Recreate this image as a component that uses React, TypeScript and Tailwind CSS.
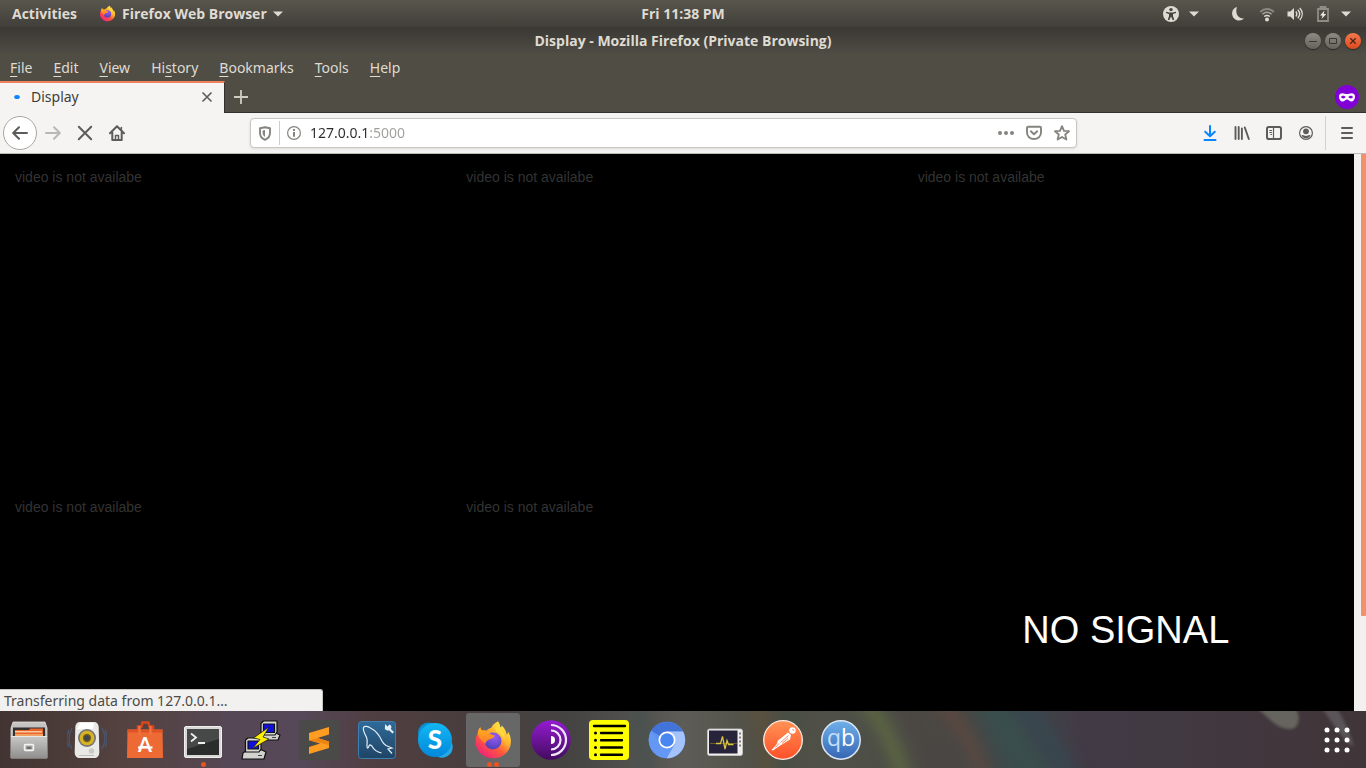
import type { ReactNode } from "react";

function Caret() {
  return (
    <svg width="10" height="6" viewBox="0 0 10 6" fill="currentColor" aria-hidden="true">
      <path d="M0 .5h10L5 5.5z" />
    </svg>
  );
}

function FirefoxLogo({ size, id }: { size: number; id: string }) {
  return (
    <svg width={size} height={size} viewBox="0 0 40 40" aria-hidden="true">
      <defs>
        <linearGradient id={id + "body"} x1="0.85" y1="0.1" x2="0.2" y2="0.95">
          <stop offset="0" stopColor="#ffe94a" />
          <stop offset="0.35" stopColor="#ffb02e" />
          <stop offset="0.6" stopColor="#ff5b3a" />
          <stop offset="1" stopColor="#f0227a" />
        </linearGradient>
        <radialGradient id={id + "globe"} cx="0.6" cy="0.25" r="0.8">
          <stop offset="0" stopColor="#9a5cf0" />
          <stop offset="1" stopColor="#4a3fb8" />
        </radialGradient>
        <linearGradient id={id + "fox"} x1="0" y1="0" x2="0" y2="1">
          <stop offset="0" stopColor="#ffb21e" />
          <stop offset="1" stopColor="#ff7a2b" />
        </linearGradient>
      </defs>
      <path
        fill={`url(#${id}body)`}
        d="M25 1.500c1.500 2 2 4 2.200 6 .8-.5 1.300-1 1.600-2 3 3 4.500 6 4.900 9 1.300-.3 1.200-2 1.200-3 2.500 3.500 3.100 7.500 3 10.500C37.400 31.500 29.800 38.200 20.200 38.200 10.500 38.200 3 31.200 2.500 22.200c-.2-4 .8-6.500 2.200-9 .1-2 1-4.600 2.600-6 .2 1.400.7 2.500 1.500 3.300 1.400-.3 3-.1 4.500.3 2-2 3.200-2.300 5-3 1-3 4-5.100 6.700-6.300z"
      />
      <circle cx="20" cy="21" r="8.500" fill={`url(#${id}globe)`} />
      <path
        fill={`url(#${id}fox)`}
        d="M4.700 13.500c.4-2.300 1.200-4.800 2.600-6.200.2 1.500.8 2.700 1.800 3.400 2.600-.6 5.200.1 7.200 1.900 1 1.700 2.500 2.600 5.300 2.800-.2 2.500-3.600 3.300-5.400 4-2 1-3.200 1.800-3.700 4.300C7.500 20.500 5.500 17 4.700 13.500z"
      />
      <path fill="#ffd93b" d="M25 1.500c1.500 2 2 4 2.200 6 3.500 4 5 8 4.200 13-1.500-5-4.500-8-8-9-1.800-3.500-.8-7.500 1.600-10z" />
    </svg>
  );
}

function MenuItem({ before = "", letter, after }: { before?: string; letter: string; after: string }) {
  return (
    <button type="button" className="text-[14px] leading-5 text-[#dfdbd2]">
      {before}
      <u className="decoration-1 underline-offset-[3px]">{letter}</u>
      {after}
    </button>
  );
}

function ToolButton({ label, children }: { label: string; children: ReactNode }) {
  return (
    <button
      type="button"
      aria-label={label}
      className="flex h-8 w-8 shrink-0 items-center justify-center text-[#5d5c5a]"
    >
      {children}
    </button>
  );
}

function TopPanel() {
  return (
    <header className="grid h-[27px] shrink-0 grid-cols-[1fr_auto_1fr] items-center bg-linear-to-b from-[#59564d] to-[#413f3a] px-3 font-['Open_Sans',sans-serif] text-[14px] leading-5 font-bold text-[#dfdbd2]">
      <div className="flex items-center gap-[22px]">
        <button type="button">Activities</button>
        <button type="button" className="flex items-center gap-[6px]">
          <FirefoxLogo size={17} id="panel" />
          <span>Firefox Web Browser</span>
          <Caret />
        </button>
      </div>
      <button type="button">Fri 11:38 PM</button>
      <div className="flex items-center justify-end gap-3 pr-[3px]">
        <button type="button" aria-label="Accessibility" className="mr-5 flex items-center gap-[10px]">
          <svg width="16" height="16" viewBox="0 0 16 16" aria-hidden="true">
            <circle cx="8" cy="8" r="8" fill="#dfdbd2" />
            <circle cx="8" cy="3.600" r="1.700" fill="#45433e" />
            <path d="M3 5.700l3.300.7h3.400l3.300-.7v1.300l-3 .9v2l1.200 3.900-1.400.4L8 10.500l-1.800 3.700-1.400-.4L6 9.900v-2l-3-.9z" fill="#45433e" />
          </svg>
          <Caret />
        </button>
        <button type="button" aria-label="System menu" className="flex items-center">
          <svg className="mr-[14px]" width="14" height="16" viewBox="0 0 14 16" aria-hidden="true">
            <path d="M6 1C2.500 2 .8 5 1.200 8.500 1.700 12 4.500 14.500 8 14.500c2.200 0 3.800-.8 5-2.200-5 .8-9.500-4.300-7-11.300z" fill="#dfdbd2" />
          </svg>
          <svg className="mr-3" width="16" height="16" viewBox="0 0 16 16" fill="none" aria-hidden="true">
            <path d="M1.200 6c4-4 9.600-4 13.600 0" stroke="#8a8780" strokeWidth="1.800" />
            <path d="M3.300 8.300c3-2.600 6.400-2.600 9.400 0" stroke="#a5a29a" strokeWidth="1.500" />
            <path d="M5.200 10.500c2-1.500 3.600-1.500 5.600 0" stroke="#dfdbd2" strokeWidth="1.500" />
            <circle cx="8" cy="13.500" r="2" fill="#dfdbd2" />
          </svg>
          <svg className="mr-3" width="16" height="16" viewBox="0 0 16 16" fill="none" aria-hidden="true">
            <path d="M.5 5.500h2.800L7 2v12L3.300 10.500H.5z" fill="#dfdbd2" />
            <path d="M8.800 5.500c1.200 1.500 1.200 3.500 0 5M10.800 3.800c2.300 2.600 2.300 5.800 0 8.400M12.800 2c3.200 3.600 3.200 8.400 0 12" stroke="#dfdbd2" strokeWidth="1.400" />
          </svg>
          <svg className="mr-[10px]" width="16" height="16" viewBox="0 0 16 16" fill="none" aria-hidden="true">
            <path d="M5.500 2.500V1h5v1.500M3 3h10v12H3z" stroke="#8f8c85" strokeWidth="1.800" />
            <path d="M9.500 4.500L5 9.500h2.500L6.500 13l4.700-5H8.700z" fill="#f0ece4" />
          </svg>
          <Caret />
        </button>
      </div>
    </header>
  );
}

function TitleBar() {
  const round = "flex h-4 w-4 items-center justify-center rounded-full shadow-[0_1px_1px_#2a2926] ";
  return (
    <div className="grid h-7 shrink-0 grid-cols-[1fr_auto_1fr] items-center bg-linear-to-b from-[#3a3834] to-[#504d45] px-[5px]">
      <span />
      <h1 className="font-['Open_Sans',sans-serif] text-[14px] leading-5 font-bold text-[#dfdbd2]">
        Display - Mozilla Firefox (Private Browsing)
      </h1>
      <div className="flex justify-end gap-1">
        <button type="button" aria-label="Minimize" className={round + "bg-linear-to-b from-[#8d8b83] to-[#65635c]"}>
          <svg width="16" height="16" viewBox="0 0 16 16" stroke="#3a3834" aria-hidden="true">
            <path d="M4 8.500h8" />
          </svg>
        </button>
        <button type="button" aria-label="Maximize" className={round + "bg-linear-to-b from-[#8d8b83] to-[#65635c]"}>
          <svg width="16" height="16" viewBox="0 0 16 16" stroke="#3a3834" fill="none" aria-hidden="true">
            <path d="M4.500 5.500h7v5h-7z" />
          </svg>
        </button>
        <button type="button" aria-label="Close window" className={round + "bg-linear-to-b from-[#f4784e] to-[#dc4a1a]"}>
          <svg width="16" height="16" viewBox="0 0 16 16" stroke="#4b2415" strokeWidth="1.300" aria-hidden="true">
            <path d="M5.300 5.300l5.400 5.400M10.700 5.300l-5.400 5.400" />
          </svg>
        </button>
      </div>
    </div>
  );
}

function MenuBar() {
  return (
    <nav aria-label="Menu" className="flex h-[26px] shrink-0 items-center gap-[21px] bg-[#504d45] px-[10px]">
      <MenuItem letter="F" after="ile" />
      <MenuItem letter="E" after="dit" />
      <MenuItem letter="V" after="iew" />
      <MenuItem before="Hi" letter="s" after="tory" />
      <MenuItem letter="B" after="ookmarks" />
      <MenuItem letter="T" after="ools" />
      <MenuItem letter="H" after="elp" />
    </nav>
  );
}

function TabStrip() {
  return (
    <div className="flex h-8 shrink-0 items-stretch bg-[#504d45]">
      <div className="flex w-[225px] items-center border-t-2 border-r border-t-[#f0805a] border-r-[#33312e] bg-[#f5f4f2] pr-[7px] pb-0.5 pl-[14px]">
        <svg width="6" height="6" viewBox="0 0 6 6" aria-hidden="true">
          <ellipse cx="3" cy="3" rx="2.800" ry="2" fill="#0a84ff" />
        </svg>
        <span className="ml-[11px] flex-1 text-[14px] leading-5 text-[#3e3d3a]">Display</span>
        <button type="button" aria-label="Close tab" className="flex h-5 w-5 items-center justify-center text-[#5d5c5a]">
          <svg width="12" height="12" viewBox="0 0 12 12" stroke="currentColor" strokeWidth="1.600" aria-hidden="true">
            <path d="M1.500 1.500l9 9M10.500 1.500l-9 9" />
          </svg>
        </button>
      </div>
      <div className="flex flex-1 items-center justify-between border-b border-[#33312e] pr-[7px] pl-[2px]">
        <button type="button" aria-label="New tab" className="flex h-7 w-7 items-center justify-center text-[#cfccc4]">
          <svg width="14" height="14" viewBox="0 0 14 14" stroke="currentColor" strokeWidth="1.800" aria-hidden="true">
            <path d="M7 0v14M0 7h14" />
          </svg>
        </button>
        <svg width="24" height="24" viewBox="0 0 24 24" role="img" aria-label="Private browsing">
          <circle cx="12" cy="12" r="12" fill="#8000d7" />
          <path
            fill="#fff"
            fillRule="evenodd"
            d="M7.500 8.300c1.800 0 3 .8 4.500.8s2.700-.8 4.500-.8c2.500 0 3.500 1.300 3.500 3.400 0 2.500-1.500 4.800-3.600 4.800-1.900 0-2.900-2-4.400-2s-2.500 2-4.400 2C5.500 16.500 4 14.200 4 11.700c0-2.100 1-3.400 3.500-3.400zM8.300 10.800c-1.200 0-2 .7-2.300 1.300.4.700 1.200 1.300 2.300 1.300 1.100 0 1.900-.6 2.300-1.300-.4-.6-1.200-1.300-2.300-1.300zM15.700 10.800c-1.100 0-1.900.7-2.300 1.300.4.700 1.200 1.300 2.300 1.300 1.100 0 1.900-.6 2.300-1.300-.3-.6-1.200-1.300-2.300-1.300z"
          />
        </svg>
      </div>
    </div>
  );
}

function NavBar() {
  return (
    <div className="flex h-[41px] shrink-0 items-center border-b border-[#bcbab7] bg-[#f5f4f2]">
      <div className="flex w-[250px] shrink-0 items-center pl-[3px]">
        <button
          type="button"
          aria-label="Back"
          className="flex h-[34px] w-[34px] items-center justify-center rounded-full border border-[#a9a7a4] bg-white text-[#5d5c5a]"
        >
          <svg width="16" height="16" viewBox="0 0 16 16" fill="none" stroke="currentColor" strokeWidth="2" strokeLinecap="round" strokeLinejoin="round" aria-hidden="true">
            <path d="M15 8H1.500M7 2.200L1.200 8 7 13.800" />
          </svg>
        </button>
        <ToolButton label="Forward">
          <svg width="16" height="16" viewBox="0 0 16 16" fill="none" stroke="#b9b8b6" strokeWidth="2" strokeLinecap="round" strokeLinejoin="round" aria-hidden="true">
            <path d="M1 8h13.500M9 2.200L14.800 8 9 13.800" />
          </svg>
        </ToolButton>
        <ToolButton label="Stop">
          <svg width="16" height="16" viewBox="0 0 16 16" stroke="currentColor" strokeWidth="2" strokeLinecap="round" aria-hidden="true">
            <path d="M1.800 1.800l12.400 12.400M14.200 1.800L1.800 14.200" />
          </svg>
        </ToolButton>
        <ToolButton label="Home">
          <svg width="16" height="16" viewBox="0 0 16 16" fill="none" stroke="currentColor" strokeWidth="2" strokeLinecap="round" strokeLinejoin="round" aria-hidden="true">
            <path d="M1 8.200L8 1.300l7 6.900M3.300 7v8h9.400V7" />
            <path d="M6.500 15v-4.500h3V15" strokeWidth="1.500" />
            <path d="M12.300 2.500v2.300" strokeWidth="1.500" />
          </svg>
        </ToolButton>
      </div>

      <div className="flex h-[30px] min-w-0 flex-1 items-center rounded-[4px] border border-[#c9c5bf] bg-white shadow-[0_1px_3px_#0000001a]">
        <button type="button" aria-label="Tracking protection" className="flex h-6 w-[29px] shrink-0 items-center justify-center border-r border-[#cfcdca]">
          <svg width="14" height="15" viewBox="0 0 14 15" aria-hidden="true">
            <path d="M7 1.200l5 1V7c0 3.200-2 5.500-5 6.800C4 12.500 2 10.200 2 7V2.200z" fill="none" stroke="#85847f" strokeWidth="1.900" strokeLinejoin="round" />
            <path d="M7 4v7C5.200 9.800 4.600 8.500 4.600 7V4.400z" fill="#85847f" />
          </svg>
        </button>
        <button type="button" aria-label="Site information" className="flex h-6 w-[30px] shrink-0 items-center justify-center pr-0.5">
          <svg width="14" height="14" viewBox="0 0 14 14" fill="none" stroke="#85847f" aria-hidden="true">
            <circle cx="7" cy="7" r="6.400" strokeWidth="1.200" />
            <path d="M7 6v4.700" strokeWidth="2" />
            <path d="M7 3v2" strokeWidth="2" />
          </svg>
        </button>
        <input
          type="text"
          aria-label="Address"
          defaultValue="127.0.0.1:5000"
          className="min-w-0 flex-1 bg-linear-to-r from-[#2e2d2b] from-[60px] to-[#a09f9d] to-[60px] bg-clip-text text-[14px] leading-5 text-transparent outline-none"
        />
        <div className="flex shrink-0 items-center gap-3 pr-[6px]">
          <button type="button" aria-label="Page actions">
            <svg width="16" height="16" viewBox="0 0 16 16" fill="#85847f" aria-hidden="true">
              <circle cx="2" cy="8" r="2" />
              <circle cx="8" cy="8" r="2" />
              <circle cx="14" cy="8" r="2" />
            </svg>
          </button>
          <button type="button" aria-label="Save to Pocket">
            <svg width="16" height="16" viewBox="0 0 16 16" fill="none" stroke="#85847f" strokeWidth="1.900" strokeLinecap="round" strokeLinejoin="round" aria-hidden="true">
              <path d="M2 1.800h12c.6 0 1 .4 1 1V7.500c0 3.800-3.100 6.500-7 6.500S1 11.300 1 7.500V2.800c0-.6.400-1 1-1z" />
              <path d="M4.800 6.300L8 9.300l3.200-3" />
            </svg>
          </button>
          <button type="button" aria-label="Bookmark this page">
            <svg width="16" height="16" viewBox="0 0 16 16" fill="none" stroke="#85847f" strokeWidth="1.800" strokeLinejoin="round" aria-hidden="true">
              <path d="M8 1.200l2 4.600 5 .4-3.800 3.300 1.200 5L8 11.900l-4.400 2.600 1.200-5L1 6.200l5-.4z" />
            </svg>
          </button>
        </div>
      </div>

      <div className="flex w-[289px] shrink-0 items-center justify-end pr-[3px]">
        <ToolButton label="Downloads">
          <svg width="14" height="16" viewBox="0 0 14 16" fill="none" stroke="#0a84ff" strokeWidth="2" strokeLinecap="round" strokeLinejoin="round" aria-hidden="true">
            <path d="M7 1v10M2.200 6.700L7 11.300l4.800-4.600M1.500 15h11" />
          </svg>
        </ToolButton>
        <ToolButton label="Library">
          <svg width="16" height="16" viewBox="0 0 16 16" fill="none" stroke="currentColor" strokeWidth="1.900" strokeLinecap="round" aria-hidden="true">
            <path d="M1.500 2v12M4.700 2v12M7.900 3.500v10.500M10.800 2.500l4 11.500" />
          </svg>
        </ToolButton>
        <ToolButton label="Sidebar">
          <svg width="16" height="16" viewBox="0 0 16 16" fill="none" stroke="currentColor" aria-hidden="true">
            <rect x="1" y="2" width="14" height="12" rx="1.800" strokeWidth="2" />
            <path d="M7.500 2.500v11" strokeWidth="1.200" />
            <path d="M3.300 5.500h2.700M3.300 7.500h2.700M4.300 9.500H6" />
          </svg>
        </ToolButton>
        <ToolButton label="Account">
          <svg width="14" height="14" viewBox="0 0 14 14" aria-hidden="true">
            <circle cx="7" cy="7" r="6.400" fill="none" stroke="currentColor" strokeWidth="1.200" />
            <circle cx="7" cy="5.300" r="2.900" fill="currentColor" />
            <path d="M2.500 9.200c1.300-.4 2 .1 2.700.4 1.200.5 2.400.5 3.600 0 .7-.3 1.400-.8 2.700-.4C10.700 11 9 12.200 7 12.200S3.300 11 2.500 9.200z" fill="currentColor" />
          </svg>
        </ToolButton>
        <div className="mr-[5px] ml-[3px] h-[34px] w-px bg-[#d3d1cf]" />
        <ToolButton label="Open menu">
          <svg width="14" height="14" viewBox="0 0 14 14" stroke="currentColor" strokeWidth="2" strokeLinecap="round" aria-hidden="true">
            <path d="M2 2h10M2 7h10M2 12h10" />
          </svg>
        </ToolButton>
      </div>
    </div>
  );
}

function VideoWall() {
  const feeds = ["feed-1", "feed-2", "feed-3", "feed-4", "feed-5"];
  return (
    <main className="relative flex min-h-0 flex-1 overflow-hidden bg-black">
      <div className="grid flex-1 auto-rows-[330px] grid-cols-3 font-['Liberation_Sans',Arial,sans-serif]">
        {feeds.map((id) => (
          <p key={id} className="px-[15px] py-[13px] text-[14px] leading-5 text-[#333333]">
            video is not availabe
          </p>
        ))}
        <div className="pr-5 pl-[15px]">
          <div className="flex h-[292px] items-center justify-center text-[38px] leading-none text-white">NO SIGNAL</div>
        </div>
      </div>
      <div className="flex w-3 shrink-0 justify-end bg-[#f2f1f0]">
        <div className="h-[83%] w-[5px] rounded-b-[1px] bg-[#f19069]" />
      </div>
      <div
        role="status"
        className="absolute bottom-0 left-0 h-[22px] w-[323px] rounded-tr-[3px] border-t border-r border-[#c6c4c1] bg-[#f2f1f0] pl-1 text-[14px] leading-[22px] text-[#4c4b48]"
      >
        Transferring data from 127.0.0.1…
      </div>
    </main>
  );
}

function DockIcon({ children }: { children: ReactNode }) {
  return (
    <svg width="40" height="40" viewBox="0 0 40 40" aria-hidden="true">
      {children}
    </svg>
  );
}

function FilesIcon() {
  return (
    <DockIcon>
      <defs>
        <linearGradient id="cabinet" x1="0" y1="0" x2="0" y2="1">
          <stop offset="0" stopColor="#c9c9c7" />
          <stop offset="1" stopColor="#8f8f8d" />
        </linearGradient>
      </defs>
      <path d="M4 2h32l2 6v30H2V8z" fill="url(#cabinet)" stroke="#dededc" strokeWidth=".8" />
      <path d="M4 7.500h32V17H4z" fill="#33302e" />
      <path d="M6 10h14l1-1.500h13V17H6z" fill="#e8662c" />
      <path d="M6 11h27v1.500H6z" fill="#fbc99f" />
      <path d="M6 14h28v3H6z" fill="#f2a263" />
      <path d="M2 16h36v22H2z" fill="url(#cabinet)" />
      <path d="M2 16.500h36" stroke="#e8e8e6" />
      <rect x="15.500" y="24.500" width="9" height="6" rx="1" fill="#bdbdbb" stroke="#f4f4f2" strokeWidth="1.500" />
      <rect x="17.500" y="26.500" width="5" height="2.500" fill="#6f6f6d" />
    </DockIcon>
  );
}

function MusicIcon() {
  return (
    <DockIcon>
      <path d="M5 8c-4 7-4 14 0 21M2 10c-3 6-3 12 0 17M35 8c4 7 4 14 0 21M38 10c3 6 3 12 0 17" fill="none" stroke="#466389" strokeWidth="1.300" opacity=".7" />
      <path d="M13 2h14c3 0 4.500 2 4.700 5l.6 25c0 4-2 6-5.300 6H13c-3.300 0-5.300-2-5.300-6l.6-25C8.500 4 10 2 13 2z" fill="#e9e9e7" />
      <path d="M13 3h14l-1 6H10z" fill="#fff" />
      <circle cx="20" cy="18" r="9" fill="#777673" />
      <circle cx="20" cy="18" r="7.300" fill="#d9b326" />
      <circle cx="20" cy="18" r="4.200" fill="#77640f" />
      <circle cx="20" cy="18" r="2.800" fill="#3f4452" />
      <circle cx="24.500" cy="31" r="2.800" fill="#c9c9c6" />
      <path d="M12 35.500h15" stroke="#bcbcb9" />
    </DockIcon>
  );
}

function SoftwareIcon() {
  return (
    <DockIcon>
      <path d="M13 10V6.500h3.500l1-4h6l1 4H28V10" fill="none" stroke="#d9471b" strokeWidth="2.500" />
      <path d="M2.500 9.500h35l.5 28.500H2z" fill="#ee6a34" />
      <path d="M2.500 9.500h35v3h-35z" fill="#dd5325" />
      <path d="M14.500 6v9M25.500 6v9" stroke="#f0733f" strokeWidth="2.500" />
      <text x="20" y="32" textAnchor="middle" fontFamily="Lato, sans-serif" fontWeight="700" fontSize="20" fill="#fff">
        A
      </text>
      <path d="M13 27.500h14.500" stroke="#fff" strokeWidth="2.200" />
    </DockIcon>
  );
}

function TerminalIcon() {
  return (
    <DockIcon>
      <rect x="1.500" y="6.500" width="37" height="31" rx="1.500" fill="#d8d8d6" stroke="#efefed" />
      <rect x="4" y="9" width="32" height="26" fill="#2b2d2d" />
      <path d="M4 9h32v10L4 29z" fill="#474949" />
      <path d="M8 13.500l5 4-5 4M15 23h7" fill="none" stroke="#eee" strokeWidth="1.800" />
    </DockIcon>
  );
}

function PuttyIcon() {
  return (
    <DockIcon>
      <g stroke="#111" strokeWidth="1.200" strokeLinejoin="round">
        <path d="M19 15l3-2h13l4 2-2 5H24z" fill="#d2d2cf" />
        <path d="M20 3.500L22.500 1H36v11l-2 3H20z" fill="#d8d8d5" />
        <path d="M22.500 4h11v8.500h-11z" fill="#1010e0" />
        <path d="M2 33l4-3h15l4 2-2 7H1z" fill="#d2d2cf" />
        <path d="M4.500 20L7 18h13v11l-2 3H4.500z" fill="#d8d8d5" />
        <path d="M7 21h10.500v8H7z" fill="#1010e0" />
        <path d="M28 7L12.500 18l6.500 1.500-7.500 9L28 19l-6-2z" fill="#ffee00" strokeWidth=".7" />
      </g>
      <path d="M17 35.500h4M31 17.500h4" stroke="#444" strokeWidth="1.200" />
    </DockIcon>
  );
}

function SublimeIcon() {
  return (
    <DockIcon>
      <rect width="40" height="40" rx="2.500" fill="#4a4a49" />
      <path d="M30 7v7.500L18.500 18 30 21.500V28L10 34v-7l11-3.500-11-3.300V13z" fill="#ff9d22" />
      <path d="M10 20.200l8.500-2.200L30 21.500V25z" fill="#ee8512" />
    </DockIcon>
  );
}

function WorkbenchIcon() {
  return (
    <DockIcon>
      <defs>
        <linearGradient id="workbench" x1="0" y1="0" x2="0" y2="1">
          <stop offset="0" stopColor="#2f6a99" />
          <stop offset="1" stopColor="#1f4465" />
        </linearGradient>
      </defs>
      <rect x="1.500" y="1.500" width="37" height="37" rx="3" fill="url(#workbench)" stroke="#3d7fb0" />
      <path
        d="M12 26c-1 3-2 2.500-2 0-.3-3 1-4.500-.3-8C8 14 5.500 10 6.500 7.500c1-2 4.500-1 7 .5 5 2.500 9.500 8.500 11.500 13 1 2 2.500 3.500 4 4.500l6 2.500-4 1 4 4.500M12 26c.7-1.800 2.500-1 3.500 1 1.500 3 5 5 9 6"
        fill="none"
        stroke="#e3edf5"
        strokeWidth="1.200"
      />
      <path d="M28 4l2.500 2.500 2-2c2 .5 2.500 3 1.300 4.500l3.200 3-1.500 1.500-3.200-3C29.500 11 27 9 28 7z" fill="#e3edf5" />
    </DockIcon>
  );
}

function SkypeIcon() {
  return (
    <DockIcon>
      <defs>
        <linearGradient id="skype" x1="0" y1="0" x2="0" y2="1">
          <stop offset="0" stopColor="#12b8f3" />
          <stop offset="1" stopColor="#0287dc" />
        </linearGradient>
      </defs>
      <circle cx="13.500" cy="13" r="10.500" fill="#0a8fd2" />
      <circle cx="27" cy="27" r="10.700" fill="#23a9e8" />
      <circle cx="20" cy="20" r="17" fill="url(#skype)" />
      <text x="20" y="29" textAnchor="middle" fontFamily="Lato, sans-serif" fontWeight="900" fontSize="26" fill="#fff">
        S
      </text>
    </DockIcon>
  );
}

function TorIcon() {
  return (
    <DockIcon>
      <defs>
        <linearGradient id="tor" x1="0" y1="0" x2="0" y2="1">
          <stop offset="0" stopColor="#951bd3" />
          <stop offset="1" stopColor="#420c5d" />
        </linearGradient>
      </defs>
      <circle cx="20" cy="20" r="19.800" fill="url(#tor)" />
      <path d="M20 16a4 4 0 010 8z" fill="#fff" />
      <path d="M20 10.500a9.500 9.500 0 010 19M20 5a15 15 0 010 30" fill="none" stroke="#f0e4f7" strokeWidth="2.200" />
    </DockIcon>
  );
}

function NotesIcon() {
  return (
    <DockIcon>
      <rect width="40" height="40" rx="4" fill="#ffff00" />
      <path d="M5 6h31M12 13h21M12 20.300h21M12 27.500h21M12 34.700h21" stroke="#000" strokeWidth="2.400" strokeLinecap="round" />
      <path d="M6.500 13h.01M6.500 20.300h.01M6.500 27.500h.01M6.500 34.700h.01" stroke="#000" strokeWidth="3" strokeLinecap="round" />
    </DockIcon>
  );
}

function ChromiumIcon() {
  return (
    <DockIcon>
      <circle cx="20" cy="20" r="18.300" fill="#5f93f0" />
      <path d="M20 20L4.200 10.800A18.300 18.300 0 0136 11.500H20z" fill="#4273d8" />
      <path d="M20 11.500h16A18.300 18.300 0 0119.500 38.300l8-14z" fill="#a4c3fa" />
      <path d="M4.200 10.800A18.300 18.300 0 0019.500 38.300l8-14-15-.3z" fill="#6597f4" />
      <circle cx="20" cy="20" r="8.500" fill="#fff" />
      <circle cx="20" cy="20" r="6.800" fill="#4a86f0" />
    </DockIcon>
  );
}

function MonitorIcon() {
  return (
    <DockIcon>
      <rect x="2.500" y="9" width="35" height="26.500" rx="2" fill="#f1f0ee" stroke="#c9c8c5" strokeWidth=".8" />
      <rect x="4" y="10.500" width="28.500" height="23" fill="#26233a" />
      <path d="M5 23.500h27" stroke="#6b6028" />
      <path d="M11 23.500h4.500l2-7 2.500 12.500 2-8.500 1.500 4h5" fill="none" stroke="#d8c341" strokeWidth="1.300" />
      <path d="M35 12.500v15" stroke="#77756f" strokeWidth="1.800" strokeDasharray="2 2" />
    </DockIcon>
  );
}

function PostmanIcon() {
  return (
    <DockIcon>
      <defs>
        <linearGradient id="postman" x1="0" y1="0" x2="0" y2="1">
          <stop offset="0" stopColor="#ff9355" />
          <stop offset="1" stopColor="#ff4f28" />
        </linearGradient>
      </defs>
      <circle cx="20" cy="20" r="19.300" fill="url(#postman)" stroke="#fbeee8" strokeWidth="1.300" />
      <circle cx="29.500" cy="10.500" r="3.200" fill="#fff" />
      <path d="M25 12.500l3 2.500-1 4.500-8 5-2.500 1.500-6.500 4.500-1.500-.5 5-5.500 1.500-4z" fill="#fff" />
      <path d="M17.500 22.500l8-7M19 23.500l6-5M12.500 27.500l3.500-4" stroke="#f5673a" strokeWidth=".8" />
      <path d="M29.500 9.500l1.500 1" stroke="#f5673a" />
    </DockIcon>
  );
}

function QbIcon() {
  return (
    <DockIcon>
      <defs>
        <linearGradient id="qb" x1="0" y1="0" x2="0" y2="1">
          <stop offset="0" stopColor="#6fb0ea" />
          <stop offset="1" stopColor="#3566b4" />
        </linearGradient>
      </defs>
      <circle cx="20" cy="20" r="19.200" fill="url(#qb)" stroke="#dfe8f3" strokeWidth="1.500" />
      <text x="20" y="26" textAnchor="middle" fontFamily="Open Sans, sans-serif" fontSize="23" fill="#c4e0fb">
        q<tspan fill="#fff">b</tspan>
      </text>
    </DockIcon>
  );
}

const apps: { name: string; icon: ReactNode; windows: number; active?: boolean }[] = [
  { name: "Files", icon: <FilesIcon />, windows: 0 },
  { name: "Rhythmbox", icon: <MusicIcon />, windows: 0 },
  { name: "Ubuntu Software", icon: <SoftwareIcon />, windows: 0 },
  { name: "Terminal", icon: <TerminalIcon />, windows: 1 },
  { name: "PuTTY", icon: <PuttyIcon />, windows: 0 },
  { name: "Sublime Text", icon: <SublimeIcon />, windows: 0 },
  { name: "MySQL Workbench", icon: <WorkbenchIcon />, windows: 0 },
  { name: "Skype", icon: <SkypeIcon />, windows: 0 },
  { name: "Firefox", icon: <FirefoxLogo size={40} id="dock" />, windows: 2, active: true },
  { name: "Tor Browser", icon: <TorIcon />, windows: 0 },
  { name: "Notes", icon: <NotesIcon />, windows: 0 },
  { name: "Chromium", icon: <ChromiumIcon />, windows: 0 },
  { name: "System Monitor", icon: <MonitorIcon />, windows: 0 },
  { name: "Postman", icon: <PostmanIcon />, windows: 0 },
  { name: "qBittorrent", icon: <QbIcon />, windows: 0 },
];

function Wallpaper() {
  return (
    <svg className="absolute inset-0 h-full w-full" viewBox="0 0 1366 57" preserveAspectRatio="none" aria-hidden="true">
      <defs>
        <linearGradient id="wall">
          <stop offset="0" stopColor="#413432" />
          <stop offset="0.09" stopColor="#54423f" />
          <stop offset="0.17" stopColor="#554755" />
          <stop offset="0.22" stopColor="#564858" />
          <stop offset="0.27" stopColor="#503e42" />
          <stop offset="0.34" stopColor="#493e3d" />
          <stop offset="0.42" stopColor="#454443" />
          <stop offset="0.5" stopColor="#5d5c57" />
          <stop offset="0.56" stopColor="#504f45" />
          <stop offset="0.63" stopColor="#4e5048" />
          <stop offset="0.69" stopColor="#4b4743" />
          <stop offset="0.74" stopColor="#3e494b" />
          <stop offset="0.79" stopColor="#423b46" />
          <stop offset="1" stopColor="#403538" />
        </linearGradient>
        <filter id="soft" x="-20%" y="-50%" width="140%" height="200%" colorInterpolationFilters="sRGB">
          <feGaussianBlur stdDeviation="7" />
        </filter>
        <filter id="fine" x="-20%" y="-50%" width="140%" height="200%" colorInterpolationFilters="sRGB">
          <feGaussianBlur stdDeviation="1.500" />
        </filter>
      </defs>
      <rect width="1366" height="57" fill="url(#wall)" />
      <g filter="url(#soft)" fill="none" strokeWidth="14">
        <path d="M856-20c24 25 40 55 50 95" stroke="#5c6742" />
        <path d="M893-20c25 25 38 55 45 95" stroke="#4a4643" />
        <path d="M932-20c25 25 42 55 55 95" stroke="#5c4840" />
        <path d="M985-20c15 30 30 60 60 95" stroke="#3a4e4d" strokeWidth="28" />
        <path d="M1010-20c25 30 45 60 65 95" stroke="#38464e" strokeWidth="20" />
        <path d="M625-20c25 30 20 60 20 95" stroke="#485250" />
        <path d="M745-20c20 30 30 60 20 95" stroke="#5c513e" />
        <path d="M800-20c-10 30-20 60-20 95" stroke="#465046" />
      </g>
      <g filter="url(#fine)">
        <path d="M1258-2h38c5 8 3 18-4 20-14 1-22-10-34-20z" fill="#66645e" />
        <path d="M1322-2h15c8 12 14 26 17 38-12-6-20-24-32-38z" fill="#5a5558" />
      </g>
    </svg>
  );
}

function Dock() {
  return (
    <nav aria-label="Dock" className="relative flex h-[57px] shrink-0 items-center justify-between overflow-hidden pr-[9px] pl-[2px]">
      <Wallpaper />
      <div className="relative flex gap-1">
        {apps.map((app) => (
          <button
            key={app.name}
            type="button"
            aria-label={app.name}
            className={
              "relative flex h-[54px] w-[54px] items-center justify-center rounded-[3px] " + (app.active ? "bg-[#686767]" : "")
            }
          >
            {app.icon}
            {app.windows > 0 && (
              <span className="absolute inset-x-0 bottom-0 flex justify-center gap-0.5">
                {Array.from({ length: app.windows }, (_, i) => (
                  <span key={i} className="h-[5px] w-[5px] rounded-full bg-[#e95420]" />
                ))}
              </span>
            )}
          </button>
        ))}
      </div>
      <button type="button" aria-label="Show applications" className="relative flex h-10 w-10 items-center justify-center">
        <svg width="26" height="26" viewBox="0 0 26 26" fill="#fff" aria-hidden="true">
          {[3, 13, 23].map((y) => [3, 13, 23].map((x) => <circle key={`${x}-${y}`} cx={x} cy={y} r="2.500" />))}
        </svg>
      </button>
    </nav>
  );
}

export default function App() {
  return (
    <div className="flex h-screen min-w-[960px] flex-col overflow-hidden bg-black font-['Noto_Sans','Open_Sans',sans-serif]">
      <TopPanel />
      <TitleBar />
      <MenuBar />
      <TabStrip />
      <NavBar />
      <VideoWall />
      <Dock />
    </div>
  );
}
